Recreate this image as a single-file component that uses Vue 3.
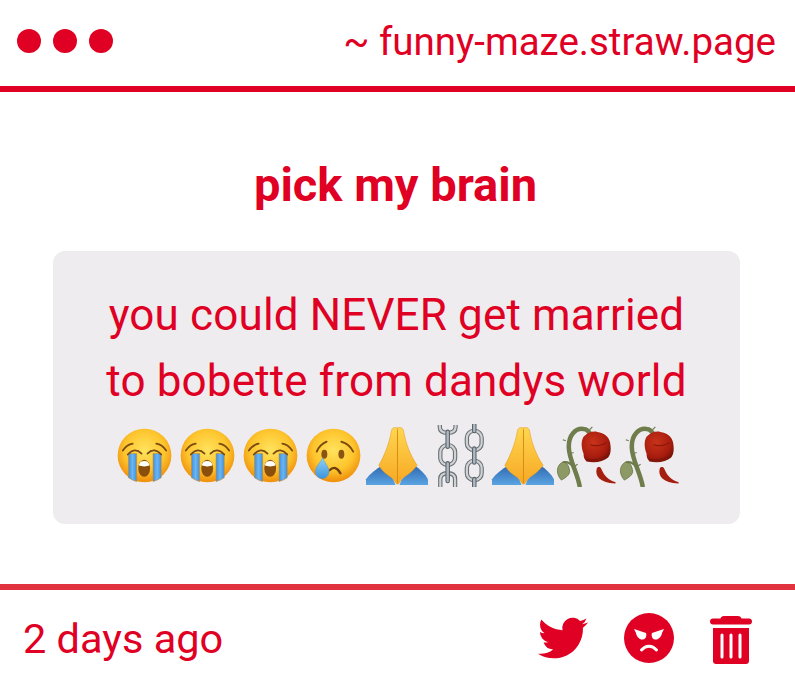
<template>
  <div class="page">
    <svg class="defs" width="0" height="0" aria-hidden="true">
      <defs>
        <radialGradient id="faceFill" cx="50%" cy="40%" r="58%">
          <stop offset="0" stop-color="#ffe35e" />
          <stop offset="0.65" stop-color="#fdc42c" />
          <stop offset="1" stop-color="#f0920f" />
        </radialGradient>
        <linearGradient id="tearFill" x1="0" y1="0" x2="1" y2="0">
          <stop offset="0" stop-color="#3f8fe0" />
          <stop offset="0.5" stop-color="#6bb6f0" />
          <stop offset="1" stop-color="#3f8fe0" />
        </linearGradient>
        <linearGradient id="dropFill" x1="0" y1="0" x2="0" y2="1">
          <stop offset="0" stop-color="#8fd4f5" />
          <stop offset="1" stop-color="#3d93dc" />
        </linearGradient>
        <linearGradient id="sleeveFill" x1="0" y1="0" x2="0" y2="1">
          <stop offset="0" stop-color="#2f68b0" />
          <stop offset="1" stop-color="#5aa4e2" />
        </linearGradient>
        <linearGradient id="palmFill" x1="0" y1="0" x2="0" y2="1">
          <stop offset="0" stop-color="#ffd650" />
          <stop offset="1" stop-color="#f7a823" />
        </linearGradient>
        <radialGradient id="roseFill" cx="40%" cy="35%" r="70%">
          <stop offset="0" stop-color="#c9331a" />
          <stop offset="0.7" stop-color="#a81c0e" />
          <stop offset="1" stop-color="#741207" />
        </radialGradient>

        <symbol id="loud" viewBox="0 0 64 64">
          <circle cx="32" cy="32" r="27.300" fill="url(#faceFill)" />
          <path d="M15.700 30h8.300v28.500a27 27 0 0 1-8.300-4z" fill="url(#tearFill)" stroke="#c98a2a" stroke-width=".6" />
          <path d="M40.700 30h8.300v24.500a27 27 0 0 1-8.300 4z" fill="url(#tearFill)" stroke="#c98a2a" stroke-width=".6" />
          <ellipse cx="31.700" cy="45" rx="6" ry="8.700" fill="#8a4f0c" />
          <path d="M26.200 42a5.600 5.500 0 0 1 11 0c-3 1.400-8 1.400-11 0z" fill="#fff" />
          <path d="M10 27q4-6 10-7M54 27q-4-6-10-7" fill="none" stroke="#7a4a12" stroke-width="1.800" stroke-linecap="round" />
          <path d="M15 31q7-8 14-1M49 31q-7-8-14-1" fill="none" stroke="#7a4a12" stroke-width="1.800" stroke-linecap="round" />
        </symbol>

        <symbol id="sad" viewBox="0 0 64 64">
          <circle cx="32" cy="32" r="27.300" fill="url(#faceFill)" />
          <path d="M15 28q3-7 10-10M40 18q8 2 12 10" fill="none" stroke="#7a4a12" stroke-width="1.900" stroke-linecap="round" />
          <ellipse cx="22.700" cy="30.700" rx="3" ry="4.500" fill="#8a5312" />
          <ellipse cx="40" cy="30.700" rx="3" ry="4.500" fill="#8a5312" />
          <path d="M28 47q6-6 11 3" fill="none" stroke="#6e3f0c" stroke-width="2.400" stroke-linecap="round" />
          <path d="M21 34c1.500 5 6.500 9 6.500 14.500a7 7 0 0 1-14 0c0-5.500 6-10 7.500-14.500z" fill="url(#dropFill)" stroke="#4a8fc8" stroke-width=".4" />
        </symbol>

        <symbol id="pray" viewBox="0 0 64 64">
          <path d="M1 62v-6c4-5 10-10 17-14l11 15 2 5z" fill="url(#sleeveFill)" />
          <path d="M64 62v-6c-3-5-8-10-14-14l-13 15-2 5z" fill="url(#sleeveFill)" />
          <path d="M33 4c-3.500-1-6 0-6.500 4.500C25 18 20 32 14 42c3 6 9 10 14 13l4 6h1z" fill="url(#palmFill)" stroke="#e2951c" stroke-width=".5" />
          <path d="M33 4c3.500-1 6 0 6.500 4.500C41 18 46 32 53 42c-4 6-10 10-15 13l-4 6h-1z" fill="url(#palmFill)" stroke="#e2951c" stroke-width=".5" />
          <path d="M33 6v54" stroke="#d98a12" stroke-width=".9" />
        </symbol>

        <symbol id="chains" viewBox="0 0 64 64">
          <g fill="none">
            <g stroke="#6a6f74" stroke-width="4.400">
              <path d="M12 1v2c0 4 3 6 8 6s8-2 8-6V1" />
              <rect x="12.500" y="21.500" width="15" height="20" rx="7" />
              <path d="M12.500 64v-8c0-4 3-6 7.500-6s7.500 2 7.500 6v8" />
              <rect x="39.500" y="7" width="15" height="19.500" rx="7" />
              <rect x="39.500" y="37.500" width="15" height="19.500" rx="7" />
            </g>
            <g stroke="#cfd3d6" stroke-width="2.200">
              <path d="M12 1v2c0 4 3 6 8 6s8-2 8-6V1" />
              <rect x="12.500" y="21.500" width="15" height="20" rx="7" />
              <path d="M12.500 64v-8c0-4 3-6 7.500-6s7.500 2 7.500 6v8" />
              <rect x="39.500" y="7" width="15" height="19.500" rx="7" />
              <rect x="39.500" y="37.500" width="15" height="19.500" rx="7" />
            </g>
            <g stroke="#5d6268" stroke-width="4.600" stroke-linecap="round">
              <path d="M20 8v15M20 40v18M47 1v6M47 25v14M47 56v7" />
            </g>
            <g stroke="#aeb9c6" stroke-width="2.400" stroke-linecap="round">
              <path d="M20 8v15M20 40v18M47 1v6M47 25v14M47 56v7" />
            </g>
          </g>
        </symbol>

        <symbol id="rose" viewBox="0 0 64 64">
          <path d="M26 63C24 50 15 36 15 23 15 11 22 4 30 5c4 0 6 3 8 7" fill="none" stroke="#6f7c4c" stroke-width="4.600" stroke-linecap="round" />
          <path d="M19 43c-3-4-6-5-10-4" fill="none" stroke="#6f7c4c" stroke-width="2.400" />
          <path d="M7.500 57C2 51 2 43 8 39c5-1 7 3 8 9 0 4-5 7-8.500 9z" fill="#8d9a66" stroke="#5c6a36" stroke-width=".7" />
          <path d="M12 17l-3-1M17 30l3-1M21 43l3-2M36 6l3-3" stroke="#6f7c4c" stroke-width="1.200" />
          <path d="M30 13c4-4 9-6 14-5 7 1 12 5 13 11 1 6 1 11-2 15-5 4-13 6-22 4-2-2-3-4-3-8-2-5-3-12 0-17z" fill="url(#roseFill)" />
          <path d="M33 36c8 1 16 0 22-5M37 21c5 2 11 1 16-2" fill="none" stroke="#7a1408" stroke-width="1" />
          <path d="M43.500 45c-2.500 8 4 15 18.500 15.500 1 0 1-1 0-1.500-6-2-11-6-14-13.500-.5-2-3.500-2.500-4.500-.5z" fill="#a51f10" />
        </symbol>
      </defs>
    </svg>

    <header class="top">
      <div class="dots">
        <span v-for="n in 3" :key="n" class="dot"></span>
      </div>
      <div class="site">~ funny-maze.straw.page</div>
    </header>

    <main class="body">
      <h1 class="title">pick my brain</h1>
      <div class="card">
        <p class="line">you could NEVER get married</p>
        <p class="line">to bobette from dandys world</p>
        <div class="emojis">
          <svg v-for="(e, i) in emojis" :key="i" class="emoji" viewBox="0 0 64 64">
            <use :href="'#' + e" />
          </svg>
        </div>
      </div>
    </main>

    <footer class="bottom">
      <span class="when">2 days ago</span>
      <div class="actions">
        <svg class="ico-twitter" viewBox="0 0 24 24" fill="#df0023">
          <path d="M23.953 4.570a10 10 0 0 1-2.825.775 4.958 4.958 0 0 0 2.163-2.723c-.951.555-2.005.959-3.127 1.184a4.920 4.920 0 0 0-8.384 4.482C7.690 8.095 4.067 6.130 1.640 3.162a4.822 4.822 0 0 0-.666 2.475c0 1.710.870 3.213 2.188 4.096a4.904 4.904 0 0 1-2.228-.616v.060a4.923 4.923 0 0 0 3.946 4.827 4.996 4.996 0 0 1-2.212.085 4.936 4.936 0 0 0 4.604 3.417 9.867 9.867 0 0 1-6.102 2.105c-.390 0-.779-.023-1.170-.067a13.995 13.995 0 0 0 7.557 2.209c9.053 0 13.998-7.496 13.998-13.985 0-.210 0-.420-.015-.630A9.935 9.935 0 0 0 24 4.590z" />
        </svg>
        <svg class="ico-angry" viewBox="0 0 50 50">
          <circle cx="25" cy="25" r="25" fill="#df0023" />
          <path d="M10 16l12 4c1 3-.2 6-3 6.500-3.500.5-6.500-3-7-6.500zM40 16l-12 4c-1 3 .2 6 3 6.500 3.500.5 6.500-3 7-6.500z" fill="#fff" />
          <path d="M17.500 37c4.500-5 10.500-5 15 0" fill="none" stroke="#fff" stroke-width="3" stroke-linecap="round" />
        </svg>
        <svg class="ico-trash" viewBox="0 0 42 48">
          <path d="M14 0h14c2 0 3 1 3.500 2.500H39c1.700 0 3 1.200 3 3s-1.300 3-3 3H3c-1.700 0-3-1.200-3-3s1.300-3 3-3h7.500C11 1 12 0 14 0z" fill="#df0023" />
          <path d="M3 12h36v33c0 1.700-1.300 3-3 3H6c-1.700 0-3-1.300-3-3z" fill="#df0023" />
          <path d="M12 19v22M21 19v22M30 19v22" stroke="#fff" stroke-width="3" stroke-linecap="round" />
        </svg>
      </div>
    </footer>
  </div>
</template>

<script setup>
const emojis = ['loud', 'loud', 'loud', 'sad', 'pray', 'chains', 'pray', 'rose', 'rose']
</script>

<style>
html, body { background: #fff; }
</style>

<style scoped>
.page {
  width: 795px; height: 686px; overflow: hidden;
  display: flex; flex-direction: column;
  background: #fff; color: #df0023;
  font-family: Roboto, "Liberation Sans", sans-serif;
}
.defs { position: absolute; }
.top {
  height: 86px; box-sizing: content-box;
  display: flex; align-items: center; justify-content: space-between;
  padding: 0 19px 0 17px;
  border-bottom: 6px solid #df0023;
}
.dots { display: flex; gap: 12px; margin-top: -4px; }
.dot { width: 24px; height: 24px; border-radius: 50%; background: #df0023; }
.site { font-size: 38.500px; margin-top: -4px; }
.body {
  flex: 1;
  display: flex; flex-direction: column; align-items: center;
}
.title {
  margin: 62px 4px 36px 0; font-size: 47px; line-height: 61px; font-weight: 700;
}
.card {
  width: 687px; height: 273px; box-sizing: border-box;
  margin-right: 2px; padding-top: 31px;
  background: #eeecee; border-radius: 12px;
  text-align: center;
}
.line { margin: 0; font-size: 44px; line-height: 66px; letter-spacing: .15px; }
.emojis { display: flex; justify-content: center; margin-top: 10px; }
.emoji { width: 63px; height: 63px; flex: none; }
.bottom {
  height: 102px; box-sizing: border-box;
  display: flex; align-items: center; justify-content: space-between;
  padding: 0 43px 0 23px;
  border-top: 6px solid #e0323f;
}
.when { font-size: 41.500px; }
.actions { display: flex; align-items: center; gap: 36px; }
.ico-twitter { width: 50px; height: 50px; }
.ico-angry { width: 50px; height: 50px; }
.ico-trash { width: 42px; height: 48px; margin-top: 4px; }
</style>
